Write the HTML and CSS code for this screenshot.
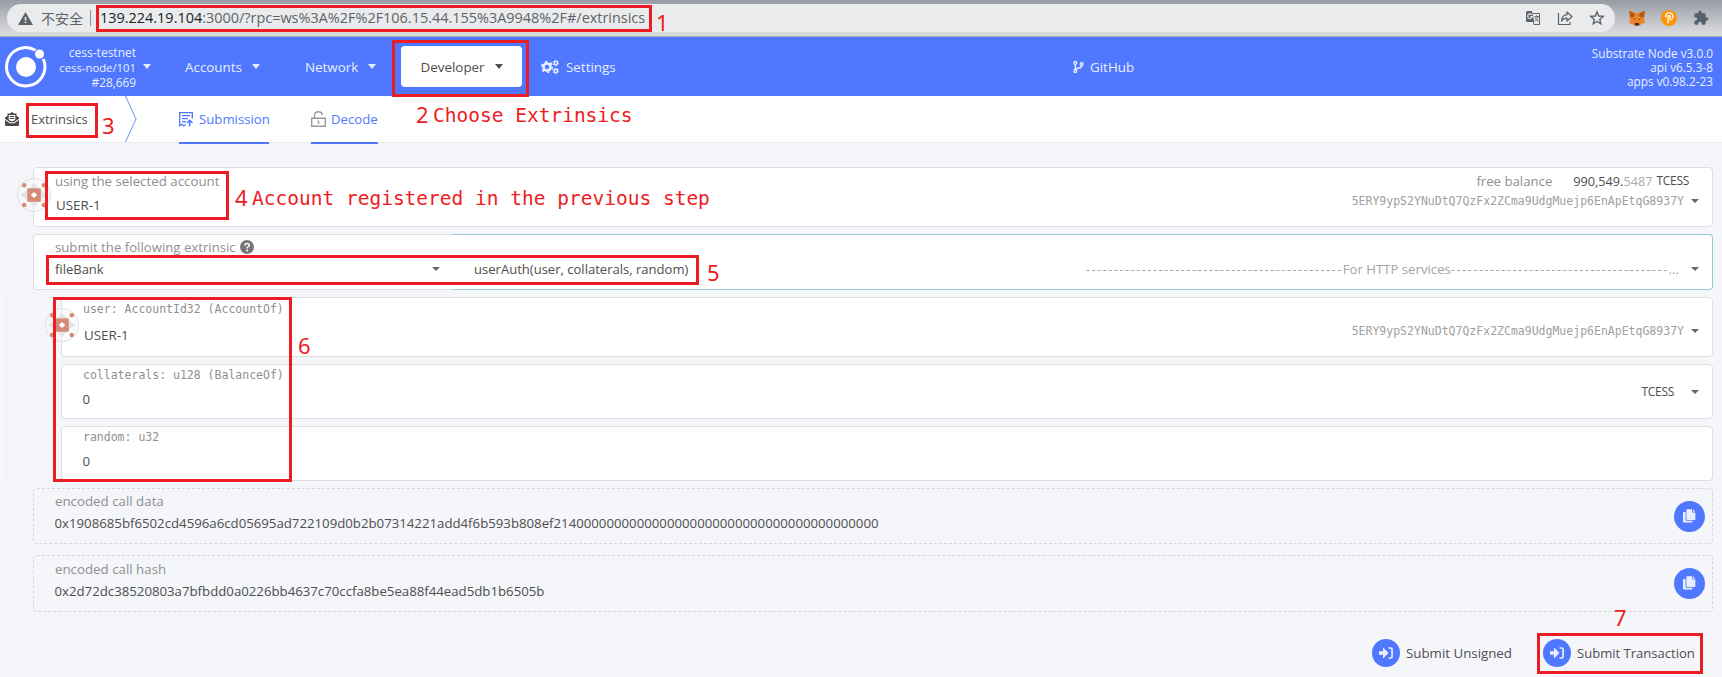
FILE: index.html
```html
<!DOCTYPE html>
<html lang="en">
<head>
<meta charset="utf-8">
<title>Extrinsics</title>
<link rel="stylesheet" href="styles.css">
</head>
<body>
<svg class="defs" aria-hidden="true">
  <symbol id="copy" viewBox="0 0 16 18"><path d="M5.2 0h6v4h4v9.2H5.200q-1 0-1-1V1q0-1 1-1zM12.200 0l3 3h-3zM0 4.500q0-1 1-1h2.200v9.700q0 1 1 1h7.500v1.300q0 1-1 1H1q-1 0-1-1z"/></symbol>
  <symbol id="enter" viewBox="0 0 14 12"><path d="M0 4.200h4V1.300q0-.8.600-.3L9 5.500q.5.500 0 1L4.600 11q-.6.500-.6-.3V7.800H0z"/><path d="M9.500 1h2.100q1.500 0 1.500 1.500v7q0 1.500-1.500 1.500H9.500" fill="none" stroke="currentColor" stroke-width="1.700"/></symbol>
  <symbol id="ident" viewBox="0 0 34 34"><circle cx="17" cy="17" r="16.500" fill="#f8f8fa" fill-opacity=".6" stroke="#dedfe1"/><path d="M17 4.500 22.500 11.500 31 17l-8.500 5.500L17 29.500 11.500 22.500 3 17l8.500-5.500z" fill="#e3e4e6"/><g fill="#d58b76"><circle cx="7.200" cy="7.300" r="2.300"/><circle cx="26.800" cy="7.300" r="2.300"/><circle cx="7.200" cy="27" r="2.300"/><circle cx="26.800" cy="27" r="2.300"/><path d="M10.300 10.300h13.500v13.500H10.300z"/></g><path d="M17 14l3.200 3-3.200 3-3.200-3z" fill="#fff"/></symbol>
</svg>

<div class="browser">
  <div class="omnibox">
    <svg class="warn" viewBox="0 0 15 13"><path d="M7.500 0 15 13H0z" fill="#5f6368"/><path d="M6.700 5h1.600v3.600H6.700zm0 4.500h1.600V11H6.700z" fill="#e9ebec"/></svg>
    <span class="unsafe">不安全</span>
    <span class="sep"></span>
    <span class="url"><b>139.224.19.104</b>:3000/?rpc=ws%3A%2F%2F106.15.44.155%3A9948%2F#/extrinsics</span>
    <span class="grow"></span>
    <svg class="oi" viewBox="0 0 16 16"><path d="M2.500 1H7l2.300 11H2.500Q1 12 1 10.500v-8Q1 1 2.500 1z" fill="#5f6368"/><path d="M8 3.500h6.500v11H9L8.300 12" fill="none" stroke="#5f6368"/><path d="M6.800 4.700A2.300 2.300 0 1 0 7.300 6.500H5.200" fill="none" stroke="#e9ebec" stroke-width="1.100"/><path d="M9.300 6.500h4.500M11.500 5.300v1.200M13 6.500q-.6 3.200-3 4.800M10 7.500q1.200 3 3.700 4" fill="none" stroke="#5f6368" stroke-width=".9"/></svg>
    <svg class="oi" viewBox="0 0 16 16"><path d="M1.500 3v11.500h11.500V12" fill="none" stroke="#5f6368" stroke-width="1.200"/><path d="M4.500 11q.5-6 5.500-6.300V2l5 4.500L10 11V8.200Q6.500 8 4.500 11z" fill="none" stroke="#5f6368" stroke-width="1.200" stroke-linejoin="round"/></svg>
    <svg class="oi" viewBox="0 0 16 16"><path d="M8 1.800 9.700 6l4.500.4-3.400 3 1 4.400L8 11.500l-3.800 2.300 1-4.400-3.400-3L6.300 6z" fill="none" stroke="#5f6368" stroke-width="1.400"/></svg>
  </div>
  <svg class="ext" viewBox="0 0 16 16"><path d="M.3.500 6 3h4L15.700.500l-.6 7 .6 5.500-3.700 1.500-2.300 1H6.300l-2.300-1L.3 13l.6-5.500z" fill="#ee8425"/><path d="M.3.500 6 4 5 7 1 7.500zM15.700.500 10 4l1 3 4 .5z" fill="#b5571d"/><path d="M6 13h4l.3 2.500H5.700z" fill="#3a3030"/><path d="M3.800 8.500 6.500 9 6 10zM12.200 8.500 9.500 9l.5 1z" fill="#4a3525"/></svg>
  <svg class="ext" viewBox="0 0 16 16"><circle cx="8" cy="8" r="8" fill="#ff9500"/><path d="M4.600 7.300A3.700 3.700 0 1 1 8.400 10.200M7 13.500V6.800q0-1.300 1.200-1.300t1.200 1.200T8 8.200" fill="none" stroke="#fff" stroke-width="1.300"/></svg>
  <svg class="ext puzzle" viewBox="0 0 24 24"><path d="M20.500 11H19V7a2 2 0 0 0-2-2h-4V3.500a2.500 2.500 0 0 0-5 0V5H4a2 2 0 0 0-2 2v3.800h1.500a2.700 2.700 0 0 1 0 5.400H2V20a2 2 0 0 0 2 2h3.800v-1.500a2.700 2.700 0 0 1 5.400 0V22H17a2 2 0 0 0 2-2v-4h1.500a2.500 2.500 0 0 0 0-5z" fill="#56616f"/></svg>
</div>

<header class="topbar">
  <svg class="logo" viewBox="0 0 42 42"><g fill="none" stroke="#fff" stroke-width="3"><path d="M30.500 4.200A19.200 19.200 0 1 0 38.300 13"/></g><circle cx="21" cy="21" r="10" fill="#fff"/><circle cx="34.500" cy="8" r="4.500" fill="#fff"/></svg>
  <div class="chain"><div class="c1">cess-testnet</div><div class="c2">cess-node/101</div><div class="c3">#28,669</div></div>
  <i class="caret"></i>
  <nav class="menu">
    <a class="accounts"><span>Accounts</span><i class="caret"></i></a>
    <a class="network"><span>Network</span><i class="caret"></i></a>
    <a class="dev"><span>Developer</span><i class="caret"></i></a>
    <a class="settings"><svg viewBox="0 0 18 14"><g fill="none" stroke="currentColor"><circle cx="6" cy="7" r="3.500" stroke-width="2.600"/><circle cx="6" cy="7" r="5.300" stroke-width="1.700" stroke-dasharray="2.400 3.150"/><circle cx="14.800" cy="3" r="1.700" stroke-width="1.500"/><circle cx="14.800" cy="11" r="1.700" stroke-width="1.500"/><circle cx="14.800" cy="3" r="2.700" stroke-width=".9" stroke-dasharray="1.400 1.420"/><circle cx="14.800" cy="11" r="2.700" stroke-width=".9" stroke-dasharray="1.400 1.420"/></g></svg><span>Settings</span></a>
    <a class="github"><svg viewBox="0 0 12 14"><g fill="none" stroke="currentColor" stroke-width="1.500"><circle cx="2.500" cy="2.500" r="1.500"/><circle cx="2.500" cy="11.500" r="1.500"/><circle cx="9.500" cy="3.800" r="1.500"/><path d="M2.500 4v6M9.500 5.300q0 2.500-3 2.800-3.500.3-4 2"/></g></svg><span>GitHub</span></a>
  </nav>
  <div class="versions"><div class="v1">Substrate Node v3.0.0</div><div class="v2">api v6.5.3-8</div><div class="v3">apps v0.98.2-23</div></div>
</header>

<div class="tabs">
  <svg class="env" viewBox="0 0 14 14"><path d="M0 5.500 2.500 3.700V1.500H5L7 0l2 1.500h2.500v2.200L14 5.500V7L9 10.500H5L0 7z" fill="#4a4a4a"/><path d="M3.700 3h6.600v4.500L8.500 9h-3L3.700 7.500z" fill="#fff"/><path d="M4.700 4.500h4.600M4.700 6.500h4.600" stroke="#4a4a4a"/><path d="M0 7.200l4.700 3.400h4.600L14 7.200" fill="none" stroke="#fff" stroke-width=".8"/><path d="M0 8l4.700 3.300h4.600L14 8v4.700q0 1.300-1.300 1.300H1.300Q0 14 0 12.700z" fill="#4a4a4a"/></svg>
  <span class="title">Extrinsics</span>
  <svg class="chev" viewBox="0 0 12 46"><path d="M.5 0 11 23 .5 46" fill="none" stroke="#86a2f8" stroke-width="1.100"/></svg>
  <a class="tab submission"><svg viewBox="0 0 14 15"><path d="M13.300 6.500V.700H.700v13l2-1.400 2 1.700 1.800-1.500M3 3.700h8M3 6.700h6M3 9.700h4" fill="none" stroke="currentColor" stroke-width="1.300"/><path d="M10.700 14.500V8.700M8 11l2.700-2.700L13.500 11" fill="none" stroke="currentColor" stroke-width="1.500"/></svg><span>Submission</span></a>
  <a class="tab decode"><svg viewBox="0 0 15 16"><path d="M3.500 7V4.500q0-3.700 4-3.700 3.500 0 4 3" fill="none" stroke="#999" stroke-width="1.400"/><path d="M.700 7.200h13.600v8H.700z" fill="none" stroke="#999" stroke-width="1.400"/><path d="M6.800 9.500h1.400v3.500H6.800z" fill="#999"/></svg><span>Decode</span></a>
</div>

<main>
  <section class="card account">
    <svg class="ident"><use href="#ident"/></svg>
    <div class="left"><label class="l-using">using the selected account</label><span class="value">USER-1</span></div>
    <div class="right">
      <div class="balance"><label>free balance</label><span class="amount">990,549.<em>5487</em></span><span class="unit">TCESS</span></div>
      <div class="addr">5ERY9ypS2YNuDtQ7QzFx2ZCma9UdgMuejp6EnApEtqG8937Y<i class="caret sm"></i></div>
    </div>
  </section>

  <section class="split">
    <div class="card section-name">
      <label>submit the following extrinsic <svg class="help" viewBox="0 0 14 14"><circle cx="7" cy="7" r="7" fill="#767676"/><path d="M4.800 5.400Q5 3.500 7.100 3.500T9.300 5.300Q9.300 6.300 8 6.900 7.100 7.300 7.100 8.400" fill="none" stroke="#fff" stroke-width="1.500"/><circle cx="7.100" cy="10.400" r="1" fill="#fff"/></svg></label>
      <div class="pick"><span>fileBank</span><i class="caret sm"></i></div>
    </div>
    <div class="card method">
      <span class="call">userAuth(user, collaterals, random)</span>
      <span class="doc"><span class="dash">----------------------------------------------</span><span>For HTTP services</span><span class="dash">---------------------------------------</span><span>...</span></span>
      <i class="caret sm"></i>
    </div>
  </section>

  <div class="params">
    <section class="card param-user">
      <svg class="ident"><use href="#ident"/></svg>
      <div class="left"><label class="mono">user: AccountId32 (AccountOf)</label><span class="value">USER-1</span></div>
      <div class="addr">5ERY9ypS2YNuDtQ7QzFx2ZCma9UdgMuejp6EnApEtqG8937Y<i class="caret sm"></i></div>
    </section>
    <section class="card param">
      <div class="left"><label class="mono">collaterals: u128 (BalanceOf)</label><span class="value">0</span></div>
      <div class="units"><span class="unit">TCESS</span><i class="caret sm"></i></div>
    </section>
    <section class="card param">
      <div class="left"><label class="mono">random: u32</label><span class="value">0</span></div>
    </section>
  </div>

  <section class="card output data">
    <div><label class="l-data">encoded call data</label><p class="hex hex1">0x1908685bf6502cd4596a6cd05695ad722109d0b2b07314221add4f6b593b808ef2140000000000000000000000000000000000000000</p></div>
    <button class="copy"><svg><use href="#copy"/></svg></button>
  </section>
  <section class="card output hash">
    <div><label class="l-hash">encoded call hash</label><p class="hex hex2">0x2d72dc38520803a7bfbdd0a0226bb4637c70ccfa8be5ea88f44ead5db1b6505b</p></div>
    <button class="copy"><svg><use href="#copy"/></svg></button>
  </section>

  <div class="actions">
    <button class="act unsigned"><span class="ring"><svg><use href="#enter"/></svg></span><span class="t">Submit Unsigned</span></button>
    <button class="act signed"><span class="ring"><svg><use href="#enter"/></svg></span><span class="t">Submit Transaction</span></button>
  </div>
</main>

<div class="notes">
  <div class="box b1"></div><div class="num n1">1</div>
  <div class="box b2"></div><div class="num n2">2</div><div class="say s2">Choose Extrinsics</div>
  <div class="box b3"></div><div class="num n3">3</div>
  <div class="box b4"></div><div class="num n4">4</div><div class="say s4">Account registered in the previous step</div>
  <div class="box b5"></div><div class="num n5">5</div>
  <div class="box b6"></div><div class="num n6">6</div>
  <div class="box b7"></div><div class="num n7">7</div>
</div>
</body>
</html>
```
FILE: styles.css
```css
* { box-sizing: border-box; }
body { margin: 0; width: 1722px; height: 677px; overflow: hidden; position: relative; background: #f5f6fa; color: #4e4e4e; font: 13.2px/18px "Open Sans", "Noto Sans", "Noto Sans CJK SC", sans-serif; }
svg { display: block; flex: none; overflow: visible; }
span, label, a, div { white-space: nowrap; }
p { margin: 0; }
button { border: 0; padding: 0; background: none; font: inherit; color: inherit; }
.defs { position: absolute; width: 0; height: 0; }

.browser { height: 37px; padding: 4px 13px 4px 7px; display: flex; align-items: flex-start; background: linear-gradient(#989ba4, #d6d8db 88%); border-bottom: 1px solid #a9b0b8; }
.omnibox { width: 1608px; height: 28px; border-radius: 14px; background: #e9ebec; display: flex; align-items: center; padding: 0 10px 0 11px; margin-right: 14px; }
.warn { width: 15px; height: 13px; }
.unsafe { margin-left: 8px; font: 14px/20px "Noto Sans CJK SC", sans-serif; color: #5f6368; width: 43px; }
.sep { width: 1px; height: 16px; background: #8f9296; margin: 0 9px 0 6px; }
.url { font-size: 14.45px; color: #5f6368; }
.url b { font-weight: 400; color: #202124; }
.grow { flex: 1; }
.oi { width: 16px; height: 16px; margin-left: 16px; }
.ext { width: 16px; height: 16px; margin: 6px 16px 0 0; }
.ext.puzzle { margin-right: 0; }

.topbar { height: 59px; background: #4f78ff; color: #e9eeff; display: flex; align-items: center; padding: 0 9px 0 5px; }
.logo { width: 42px; height: 42px; margin-right: 1px; }
.chain { width: 88px; text-align: right; font-size: 12px; line-height: 15px; padding-top: 1px; }
.c2 { font-size: 11.3px; }
.c3 { font-size: 11.8px; }
.caret { display: block; flex: none; width: 0; height: 0; border: 4.500px solid transparent; border-top: 5px solid currentColor; border-bottom: 0; }
.chain + .caret { margin-left: 7px; margin-right: 1px; }
.caret.sm { border-width: 4.500px 4px 0; color: #666; }
.menu { display: flex; align-items: center; height: 100%; font-size: 13.4px; }
.menu a { display: flex; align-items: center; }
.accounts { margin-left: 33px; width: 120px; }
.accounts .caret, .network .caret { margin-left: 10px; }
.network { width: 96px; }
.dev { width: 121px; height: 41px; background: #fff; border-radius: 4px; color: #4e4e4e; padding-left: 19.500px; }
.dev .caret { margin-left: 10px; }
.settings { margin-left: 19px; width: 532px; }
.settings svg { width: 18px; height: 14px; margin-right: 7px; }
.github svg { width: 11px; height: 14px; margin-right: 6px; }
.versions { margin-left: auto; text-align: right; font-size: 11.8px; line-height: 14px; padding-top: 1px; }

.tabs { height: 47px; background: #fff; border-bottom: 1px solid #ececec; display: flex; align-items: center; padding-left: 5px; }
.env { width: 14px; height: 14px; }
.title { margin-left: 12px; width: 94px; font-size: 12.9px; }
.chev { width: 12px; height: 46px; margin-right: 42px; }
.tab { display: flex; align-items: center; height: 48px; align-self: flex-start; color: #4f78ff; border-bottom: 2px solid #4f78ff; font-size: 13.2px; }
.submission { width: 90px; margin-right: 42px; }
.decode { width: 67px; }
.tab svg { width: 14px; height: 15px; margin-right: 6px; }
.decode svg { width: 15px; height: 16px; margin-right: 5px; }

main { padding: 24px 9px 0 33px; display: flex; flex-direction: column; }
.card { background: #fff; border: 1px solid #dddedf; border-radius: 4px; display: flex; justify-content: space-between; position: relative; }
label { display: flex; align-items: center; color: #8f8f8f; font-size: 13.3px; }
.value { display: block; color: #4e4e4e; }
.left { display: flex; flex-direction: column; }
.ident { position: absolute; left: -17px; width: 34px; height: 34px; z-index: 1; }
.account { height: 60px; margin-bottom: 7px; padding: 4px 13px 0 21px; }
.account .ident { top: 10px; }
.account .value { margin: 6px 0 0 1px; font-size: 13.4px; }
.right { display: flex; flex-direction: column; align-items: flex-end; }
.balance { display: flex; align-items: center; margin-right: 10px; }
.balance label { font-size: 13.2px; }
.amount { margin: 0 4px 0 21px; font-size: 12.7px; }
.amount em { font-style: normal; color: #aaa; }
.unit { font-size: 12px; letter-spacing: -.3px; }
.addr { display: flex; align-items: center; font: 11.500px/18px "DejaVu Sans Mono", monospace; color: #a0a0a0; margin-top: 2px; }
.addr .caret { margin-left: 7px; }

.split { display: flex; height: 56px; margin-bottom: 7px; }
.section-name { width: 420px; border-right: 0; border-radius: 4px 0 0 4px; flex-direction: column; justify-content: flex-start; padding: 3px 13px 0 21px; }
.section-name label { font-size: 13.2px; }
.help { display: inline-block; width: 14px; height: 14px; margin-left: 4px; }
.pick { display: flex; align-items: center; justify-content: space-between; margin-top: 4px; font-size: 13px; }
.method { flex: 1; border-color: #96c8da; border-left: 0; border-radius: 0 4px 4px 0; padding: 13px 13px 0 21px; align-items: center; }
.call { font-size: 13.05px; }
.doc { margin-left: auto; margin-right: 12px; color: #a5a5a5; display: flex; }
.dash { letter-spacing: 1.340px; }

.params { position: relative; padding-left: 28px; margin-bottom: 7px; display: flex; flex-direction: column; gap: 7px; }
.params::before { content: ""; position: absolute; left: -28px; top: -3px; width: 3px; height: 189px; background: #f2f2f3; }
.mono { font: 11.5px/18px "DejaVu Sans Mono", monospace; }
.param-user { height: 60px; padding: 2px 13px 0 21px; }
.param-user .ident { top: 10px; }
.param-user .value { margin: 8px 0 0 1px; font-size: 13.4px; }
.param-user .addr { height: 18px; margin-top: 22px; }
.param { height: 55px; padding: 1px 13px 0 21px; }
.param .value { margin: 6px 0 0 -.5px; }
.units { display: flex; align-items: center; gap: 17px; }

.output { background: none; border-style: dashed; border-color: #d6d7db; padding: 3px 7px 0 21px; height: 56px; }
.output.data { margin-bottom: 11px; }
.hash { height: 57px; padding-top: 4px; }
.hex { margin: 4px 0 0 -.5px; font-size: 13.22px; }
.copy { width: 31px; height: 31px; margin-top: 9px; border-radius: 50%; background: #4f78ff; display: flex; align-items: center; justify-content: center; }
.hash .copy { margin-top: 8px; }
.copy svg { width: 13px; height: 15px; fill: #e9eeff; }
.actions { display: flex; justify-content: flex-end; margin-top: 27px; padding-right: 9px; }
.act { display: flex; align-items: center; font-size: 13.3px; }
.unsigned { width: 171px; }
.signed { width: 161px; font-size: 13.05px; }
.ring { width: 28px; height: 28px; border-radius: 50%; background: #4f78ff; color: #e9eeff; display: flex; align-items: center; justify-content: center; margin-right: 6px; }
.ring svg { width: 14px; height: 12px; fill: currentColor; }

/* red guide marks laid over the page */
.notes { position: absolute; inset: 0; z-index: 5; color: #ed1c24; }
.box, .num, .say { position: absolute; }
.box { border: 3px solid #ed1c24; }
.num { font: 22px/22px "Noto Sans", sans-serif; }
.say { font: 19.5px/22px "DejaVu Sans Mono", monospace; }
.b1 { left: 96px; top: 5px; width: 556px; height: 27px; }
.b2 { left: 392px; top: 40px; width: 137px; height: 57px; }
.b3 { left: 26px; top: 103px; width: 72px; height: 35px; }
.b4 { left: 45px; top: 171px; width: 184px; height: 49px; }
.b5 { left: 46px; top: 255px; width: 653px; height: 30px; }
.b6 { left: 53px; top: 297px; width: 239px; height: 185px; }
.b7 { left: 1537px; top: 633px; width: 166px; height: 41px; }
.n1 { left: 656px; top: 11px; }
.n2 { left: 416px; top: 103px; }
.n3 { left: 102px; top: 114px; }
.n4 { left: 235px; top: 186px; }
.n5 { left: 707px; top: 261px; }
.n6 { left: 298px; top: 334px; }
.n7 { left: 1614px; top: 606px; }
.s2 { left: 433px; top: 105px; }
.s4 { left: 252px; top: 188px; }
```
